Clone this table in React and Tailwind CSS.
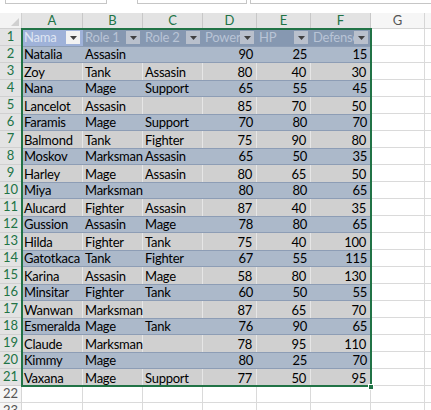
import React from "react";

const cols = [
  { w: "w-[61px]", label: "A" },
  { w: "w-[60px]", label: "B" },
  { w: "w-[60px]", label: "C" },
  { w: "w-[54px]", label: "D" },
  { w: "w-[54px]", label: "E" },
  { w: "w-[60px]", label: "F" },
];

const data = [
  ["Natalia", "Assasin", "", 90, 25, 15],
  ["Zoy", "Tank", "Assasin", 80, 40, 30],
  ["Nana", "Mage", "Support", 65, 55, 45],
  ["Lancelot", "Assasin", "", 85, 70, 50],
  ["Faramis", "Mage", "Support", 70, 80, 70],
  ["Balmond", "Tank", "Fighter", 75, 90, 80],
  ["Moskov", "Marksman", "Assasin", 65, 50, 35],
  ["Harley", "Mage", "Assasin", 80, 65, 50],
  ["Miya", "Marksman", "", 80, 80, 65],
  ["Alucard", "Fighter", "Assasin", 87, 40, 35],
  ["Gussion", "Assasin", "Mage", 78, 80, 65],
  ["Hilda", "Fighter", "Tank", 75, 40, 100],
  ["Gatotkaca", "Tank", "Fighter", 67, 55, 115],
  ["Karina", "Assasin", "Mage", 58, 80, 130],
  ["Minsitar", "Fighter", "Tank", 60, 50, 55],
  ["Wanwan", "Marksman", "", 87, 65, 70],
  ["Esmeralda", "Mage", "Tank", 76, 90, 65],
  ["Claude", "Marksman", "", 78, 95, 110],
  ["Kimmy", "Mage", "", 80, 25, 70],
  ["Vaxana", "Mage", "Support", 77, 50, 95],
];

const headers = ["Nama", "Role 1", "Role 2", "Power", "HP", "Defense"];

function FilterBtn({ active }) {
  return (
    <div
      className={
        "relative z-[2] shrink-0 w-[14px] h-[13px] mr-[3px] flex items-center justify-center " +
        (active ? "bg-[#f2f2f2]" : "bg-[#b9c0cc]")
      }
    >
      <svg width="7" height="4" viewBox="0 0 7 4">
        <path d="M0 0 L7 0 L3.5 4 Z" fill="#404040" />
      </svg>
    </div>
  );
}

function RowHead({ n, sel }) {
  return (
    <div
      className={
        "w-[22px] shrink-0 flex items-end justify-center pb-[1px] border-b border-r " +
        (sel
          ? "bg-[#e3e3e3] text-[#217346] border-[#d0d0d0]"
          : "bg-[#f6f6f6] text-[#555] border-[#d6d6d6]")
      }
    >
      {n}
    </div>
  );
}

export default function App() {
  return (
    <div className="w-[431px] h-[410px] overflow-hidden bg-white font-['Lato','Liberation_Sans',sans-serif] text-[13px] leading-[15px] text-black">
      {/* top input boxes */}
      <div className="h-[13px] flex items-start">
        <div className="ml-[5px] w-[102px] h-[4px] border-x border-b border-[#c6c6c6]" />
        <div className="ml-[30px] w-[110px] h-[4px] border-x border-b border-[#c6c6c6]" />
        <div className="ml-[3px] flex-1 h-[4px] border-l border-b border-[#c6c6c6]" />
      </div>

      <div className="relative">
        {/* column header */}
        <div className="flex h-[16px]">
          <div className="w-[22px] shrink-0 bg-[#f3f3f3] border-r border-b border-[#d0d0d0] flex items-end justify-end p-[2px]">
            <svg width="8" height="8" viewBox="0 0 8 8">
              <path d="M8 0 L8 8 L0 8 Z" fill="#d0d0d0" />
            </svg>
          </div>
          {cols.map((c) => (
            <div
              key={c.label}
              className={
                c.w +
                " shrink-0 bg-[#e3e3e3] text-[#217346] border-r border-b border-[#c8c8c8] flex items-center justify-center"
              }
            >
              {c.label}
            </div>
          ))}
          <div className="w-[54px] shrink-0 bg-[#f6f6f6] text-[#555] border-r border-b border-[#d6d6d6] flex items-center justify-center">
            G
          </div>
          <div className="flex-1 bg-[#f6f6f6] border-b border-[#d6d6d6]" />
        </div>

        {/* header row */}
        <div className="flex h-[17px] tracking-[-0.2px]">
          <RowHead n={1} sel />
          {headers.map((h, i) => (
            <div
              key={h}
              className={
                cols[i].w +
                " shrink-0 flex items-center pl-[2px] " +
                (i === 0 ? "bg-[#9fb2d9] text-[#dfe6f3]" : "bg-[#8698b1] text-[#b9c4d6]")
              }
            >
              <span className="flex-1 min-w-0 whitespace-nowrap">{h}</span>
              <FilterBtn active={i === 0} />
            </div>
          ))}
          <div className="w-[54px] shrink-0 border-r border-b border-[#dadada]" />
          <div className="flex-1 border-b border-[#dadada]" />
        </div>

        {/* body rows */}
        {data.map((r, ri) => {
          const blue = ri % 2 === 0;
          return (
            <div key={ri} className="flex h-[17px]">
              <RowHead n={ri + 2} sel />
              {r.map((v, ci) => {
                const num = ci >= 3;
                const nextFilled = ci < 5 && r[ci + 1] !== "";
                return (
                  <div
                    key={ci}
                    className={
                      cols[ci].w +
                      " shrink-0 flex items-end whitespace-nowrap tracking-[-0.25px] " +
                      (num ? "justify-end pr-[4px] " : "pl-[2px] ") +
                      (blue
                        ? "bg-[#acb9ca] border-y border-[#8d9db5] "
                        : "bg-[#d0d0d0] border-r border-[#e6e6e6] ") +
                      (nextFilled ? "overflow-hidden" : "overflow-visible relative z-[1]")
                    }
                  >
                    {v}
                  </div>
                );
              })}
              <div className="w-[54px] shrink-0 border-r border-b border-[#dadada]" />
              <div className="flex-1 border-b border-[#dadada]" />
            </div>
          );
        })}

        {/* empty rows */}
        {[22, 23].map((n) => (
          <div key={n} className="flex h-[17px]">
            <RowHead n={n} />
            {cols.map((c) => (
              <div key={c.label} className={c.w + " shrink-0 border-r border-b border-[#dadada]"} />
            ))}
            <div className="w-[54px] shrink-0 border-r border-b border-[#dadada]" />
            <div className="flex-1 border-b border-[#dadada]" />
          </div>
        ))}

        {/* selection outline */}
        <div className="absolute left-[21px] top-[15px] w-[351px] h-[359px] border-2 border-[#217346] pointer-events-none z-10" />
        <div className="absolute left-[368px] top-[371px] w-[6px] h-[6px] bg-[#217346] border border-white z-20" />
      </div>
    </div>
  );
}
